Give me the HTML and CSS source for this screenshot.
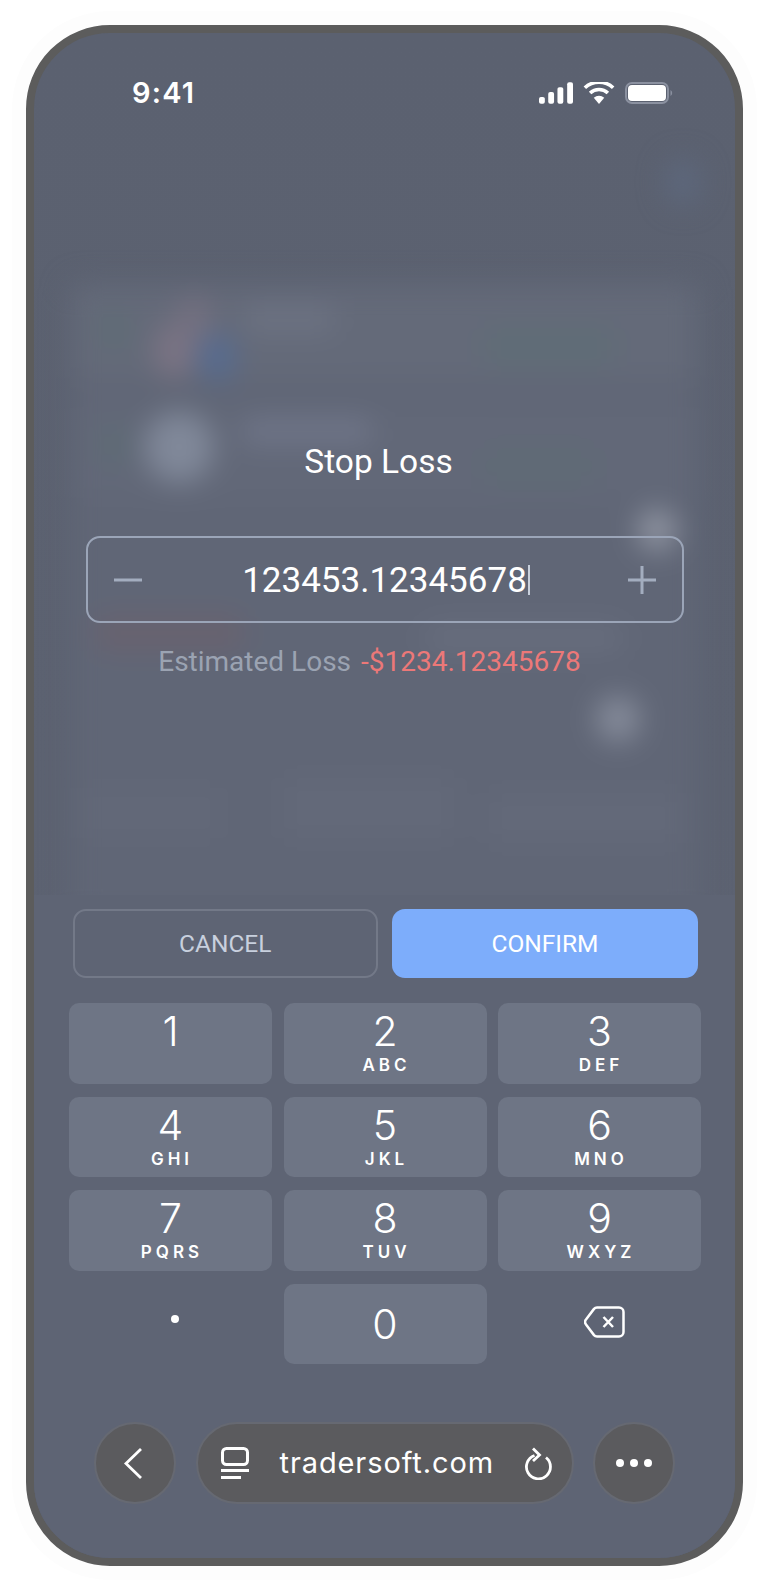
FILE: index.html
```html
<!DOCTYPE html>
<html lang="en">
<head>
<meta charset="utf-8">
<title>Stop Loss</title>
<link rel="stylesheet" href="styles.css">
</head>
<body>
<div class="phone">
  <div class="backdrop" aria-hidden="true">
    <i class="blob sheet"></i><i class="blob card1"></i><i class="blob card2"></i><i class="blob rowa"></i><i class="blob rowb"></i><i class="blob rowc"></i>
    <i class="blob pink"></i><i class="blob purple"></i><i class="blob blue"></i><i class="blob coin"></i>
    <i class="blob bar1"></i><i class="blob bar2"></i><i class="blob green1"></i><i class="blob green2"></i><i class="blob left1"></i><i class="blob left2"></i>
    <i class="blob white"></i><i class="blob grey"></i><i class="blob top"></i><i class="blob red"></i><i class="blob light"></i>
  </div>
  <div class="screen">
    <div class="status">
      <span class="time">9:41</span>
      <div class="status-icons">
        <svg class="signal" viewBox="0 0 35 22"><rect x="0" y="15" width="6" height="7" rx="2"/><rect x="9.500" y="10" width="6" height="12" rx="2"/><rect x="19" y="5" width="6" height="17" rx="2"/><rect x="29" y="0" width="6" height="22" rx="2"/></svg>
        <svg class="wifi" viewBox="0 0 30 21"><path d="M15 21l-5-6a7.500 7.500 0 0 1 10 0z"/><path class="arc" d="M6.500 10.500a12.500 12.500 0 0 1 17 0"/><path class="arc" d="M1.500 5.500a20 20 0 0 1 27 0"/></svg>
        <svg class="battery" viewBox="0 0 48 22"><rect class="shell" x="1" y="1" width="42" height="20" rx="6"/><rect class="fill" x="3" y="3" width="38" height="16" rx="4"/><path class="nub" d="M45.500 8v6a3.500 3.500 0 0 0 0-6z"/></svg>
      </div>
    </div>
    <h1 class="title">Stop Loss</h1>
    <div class="field">
      <svg class="step" viewBox="0 0 30 30"><path d="M1 15h28"/></svg>
      <div class="value">123453.12345678<span class="caret"></span></div>
      <svg class="step" viewBox="0 0 30 30"><path d="M1 15h28M15 1v28"/></svg>
    </div>
    <p class="estimate"><span class="est-label">Estimated Loss</span><span class="est-value">-$1234.12345678</span></p>
    <div class="panel">
      <div class="actions">
        <button class="btn cancel">CANCEL</button>
        <button class="btn confirm">CONFIRM</button>
      </div>
      <div class="keys">
        <div class="key"><span class="num">1</span></div>
        <div class="key"><span class="num">2</span><span class="abc">ABC</span></div>
        <div class="key"><span class="num">3</span><span class="abc">DEF</span></div>
        <div class="key"><span class="num">4</span><span class="abc">GHI</span></div>
        <div class="key"><span class="num">5</span><span class="abc">JKL</span></div>
        <div class="key"><span class="num">6</span><span class="abc">MNO</span></div>
        <div class="key"><span class="num">7</span><span class="abc">PQRS</span></div>
        <div class="key"><span class="num">8</span><span class="abc">TUV</span></div>
        <div class="key"><span class="num">9</span><span class="abc">WXYZ</span></div>
        <div class="key plain"><span class="dot"></span></div>
        <div class="key zero"><span class="num">0</span></div>
        <div class="key plain">
          <svg class="bksp" viewBox="0 0 41 32"><path d="M13 1.500h22a4.500 4.500 0 0 1 4.500 4.500v20a4.500 4.500 0 0 1-4.500 4.500H13a4 4 0 0 1-3-1.400L2 18.500a4 4 0 0 1 0-5L10 2.900a4 4 0 0 1 3-1.400z"/><path d="M19.500 11l9.500 10M29 11l-9.500 10"/></svg>
        </div>
      </div>
      <div class="nav">
        <div class="round">
          <svg class="chev" viewBox="0 0 20 33"><path d="M18 2L3 16.500 18 31"/></svg>
        </div>
        <div class="url">
          <svg class="tabs" viewBox="0 0 28 32"><rect x="1.500" y="1.500" width="25" height="16" rx="4"/><path d="M0 23.500h28M0 30.500h20"/></svg>
          <span class="domain">tradersoft.com</span>
          <svg class="reload" viewBox="0 0 30 33"><path d="M11.500 8.500A12 12 0 1 0 23 10.500"/><path d="M10 1.500l6.500 6.500-6.500 6"/></svg>
        </div>
        <div class="round">
          <span class="more"><i></i><i></i><i></i></span>
        </div>
      </div>
    </div>
  </div>
</div>
</body>
</html>
```
FILE: styles.css
```css
* { box-sizing: border-box; }
html, body { margin: 0; padding: 0; background: #fff; }
body { width: 769px; height: 1581px; padding: 25px 0 0 26px; overflow: hidden; font-family: Roboto, "Liberation Sans", sans-serif; }

.phone {
  position: relative;
  width: 717px;
  height: 1541px;
  border: 8px solid #5c5c5c;
  border-radius: 84px;
  background: linear-gradient(180deg, #5b6170 0%, #5c6271 50%, #5d6374 100%);
  overflow: hidden;
  box-shadow: 0 0 0 14px #fdfdfd;
}

.backdrop { position: absolute; inset: 0; filter: blur(14px); }
.blob { position: absolute; display: block; border-radius: 50%; }
.sheet { left: 36px; top: 250px; width: 630px; height: 640px; border-radius: 10px; background: #606676; }
.card1 { left: 40px; top: 255px; width: 620px; height: 90px; border-radius: 10px; background: #646a79; }
.card2 { left: 40px; top: 375px; width: 620px; height: 90px; border-radius: 10px; background: #626878; }
.rowa { left: 45px; top: 755px; width: 140px; height: 50px; border-radius: 6px; background: #626878; }
.rowb { left: 250px; top: 745px; width: 170px; height: 60px; border-radius: 6px; background: #636979; }
.rowc { left: 455px; top: 760px; width: 190px; height: 50px; border-radius: 6px; background: #636979; }
.pink { left: 120px; top: 290px; width: 40px; height: 56px; background: #7c7484; }
.purple { left: 142px; top: 262px; width: 36px; height: 50px; background: #747080; }
.blue { left: 164px; top: 300px; width: 38px; height: 48px; background: #566b90; }
.coin { left: 110px; top: 378px; width: 70px; height: 72px; background: #808899; }
.bar1 { left: 210px; top: 272px; width: 90px; height: 28px; border-radius: 8px; background: #6c7282; }
.bar2 { left: 208px; top: 385px; width: 130px; height: 26px; border-radius: 8px; background: #6f7588; }
.green1 { left: 450px; top: 295px; width: 130px; height: 36px; border-radius: 10px; background: #5f6d76; }
.green2 { left: 450px; top: 415px; width: 110px; height: 36px; border-radius: 10px; background: #5f6b75; }
.left1 { left: 68px; top: 275px; width: 24px; height: 44px; background: #5d6c74; }
.left2 { left: 68px; top: 390px; width: 24px; height: 44px; background: #5d6c74; }
.white { left: 603px; top: 476px; width: 40px; height: 42px; background: #8f94a1; }
.grey { left: 562px; top: 663px; width: 44px; height: 46px; background: #858b9a; }
.top { left: 632px; top: 126px; width: 34px; height: 46px; background: #5d687d; }
.red { left: 60px; top: 582px; width: 150px; height: 36px; border-radius: 12px; background: #68626f; }
.light { left: 390px; top: 590px; width: 200px; height: 30px; border-radius: 12px; background: #676d7d; }

.screen { position: relative; display: flex; flex-direction: column; height: 100%; }

.status { display: flex; justify-content: space-between; align-items: center; height: 22px; margin-top: 49px; padding: 0 62px 0 98px; }
.time { font-family: Inter, sans-serif; font-weight: 600; font-size: 29px; line-height: 22px; color: #fff; letter-spacing: 1.2px; }
.status-icons { display: flex; align-items: center; gap: 10px; }
.signal { width: 34px; height: 22px; fill: #fff; display: block; }
.wifi { width: 32px; height: 22px; display: block; fill: #fff; }
.wifi .arc { fill: none; stroke: #fff; stroke-width: 3.500; }
.battery { width: 48px; height: 22px; display: block; }
.shell { fill: none; stroke: #8b91a0; stroke-width: 2; }
.fill { fill: #fff; }
.nub { fill: #8b91a0; }

.title { margin: 338px 12px 0 0; font-size: 33.500px; font-weight: 400; line-height: 40px; color: #fff; text-align: center; }

.field { display: flex; align-items: center; justify-content: space-between; width: 598px; height: 87px; margin: 54px 0 0 52px; padding: 0 25px; border: 2px solid #9ba5b8; border-radius: 14px; }
.step { width: 30px; height: 30px; fill: none; stroke: #a3adbf; stroke-width: 3; display: block; }
.value { position: relative; font-size: 35px; line-height: 42px; color: #fff; margin: 2px 0 0 -1px; }
.caret { position: absolute; top: 5px; margin-left: 1px; width: 2px; height: 30px; background: #c9d0dc; }

.estimate { display: flex; justify-content: center; gap: 10px; margin: 23px 30px 0 0; font-size: 28px; line-height: 32px; }
.est-label { color: #9ba3b2; }
.est-value { color: #ec7878; }

.panel { margin-top: auto; height: 663px; padding-top: 14px; background: #5e6474; }
.actions { display: flex; gap: 14.500px; margin: 0 0 0 39px; }
.btn { height: 69px; border-radius: 13px; font-family: Roboto, sans-serif; font-size: 24.500px; font-weight: 450; padding: 0; }
.cancel { width: 304.500px; background: transparent; border: 2px solid #737988; color: #c8d0de; }
.confirm { width: 306px; background: #7dadfb; border: 0; color: #fff; }

.keys { display: grid; grid-template-columns: repeat(3, 203px); grid-auto-rows: 80.500px; gap: 13px 11.500px; margin: 25px 33px 0 35px; }
.key { display: flex; flex-direction: column; align-items: center; border-radius: 10px; background: #6e7585; color: #fff; padding-top: 6px; font-family: Inter, sans-serif; }
.num { font-size: 41px; line-height: 44px; font-weight: 350; }
.abc { font-size: 17px; line-height: 18px; font-weight: 600; letter-spacing: 4px; margin-top: 3px; padding-left: 3px; }
.key.plain { background: transparent; justify-content: center; padding: 0; }
.key.zero { padding-top: 18px; }
.dot { width: 8px; height: 8px; border-radius: 50%; background: #fff; margin: -10px 0 0 8px; }
.bksp { width: 41px; height: 32px; fill: none; stroke: #fff; stroke-width: 2.500; margin: -3px 0 0 10px; display: block; }

.nav { display: flex; gap: 19.500px; margin: 58px 0 0 60px; }
.round, .url { height: 82px; background: #5b5b5e; border: 2px solid #666972; }
.round { display: flex; align-items: center; justify-content: center; width: 82px; border-radius: 50%; }
.url { display: flex; align-items: center; width: 378px; border-radius: 41px; padding: 0 19px 0 23px; }
.chev { width: 20px; height: 33px; fill: none; stroke: #fff; stroke-width: 2.800; display: block; margin-right: 4px; }
.tabs { width: 28px; height: 32px; fill: none; stroke: #fff; stroke-width: 3; display: block; }
.domain { flex: 1; margin-left: 31px; font-family: Inter, sans-serif; font-size: 29px; line-height: 32px; color: #fff; letter-spacing: 0.9px; white-space: nowrap; }
.reload { width: 30px; height: 33px; fill: none; stroke: #fff; stroke-width: 2.800; display: block; }
.more { display: flex; gap: 6px; }
.more i { display: block; width: 8px; height: 8px; border-radius: 50%; background: #fff; }
```
